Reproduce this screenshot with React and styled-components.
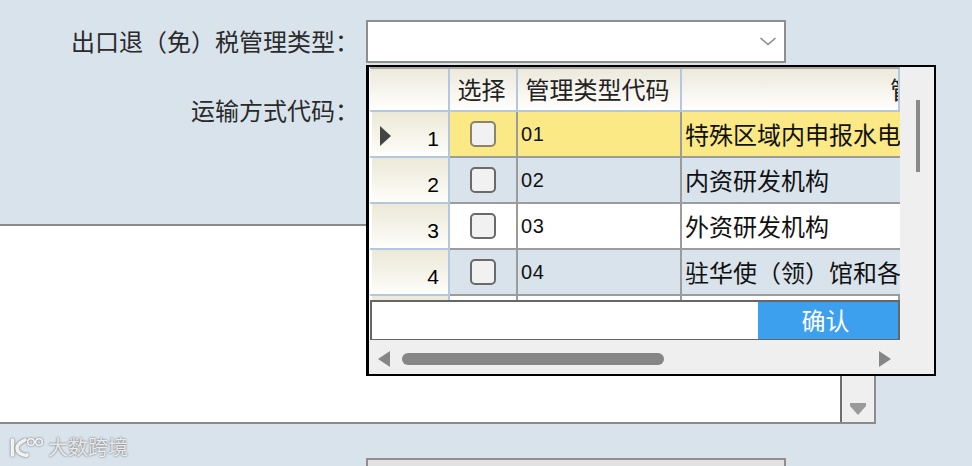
import React from 'react';
import styled, { createGlobalStyle } from 'styled-components';

const Global = createGlobalStyle`
  html, body { margin: 0; padding: 0; background: #d9e3ec; }
  * { box-sizing: border-box; }
  body { font-family: "Noto Sans CJK SC", "Liberation Sans", sans-serif; color: #222; }
`;

const Page = styled.div`
  position: relative;
  width: 972px;
  height: 466px;
  overflow: hidden;
  background: #d9e3ec;
  padding-top: 20px;
`;
const Form = styled.div`
  display: flex;
  flex-direction: column;
  gap: 26px;
`;
const FieldRow = styled.div`
  display: flex;
  align-items: flex-start;
  height: 43px;
`;
const Label = styled.label`
  width: 366px;
  flex: none;
  padding-right: 7px;
  text-align: right;
  font-size: 24px;
  line-height: 42px;
  white-space: nowrap;
  color: #2a2a2a;
`;
const Combo = styled.div`
  width: 420px;
  height: 43px;
  flex: none;
  display: flex;
  align-items: center;
  justify-content: flex-end;
  padding-right: 7px;
  background: ${p => p.$disabled ? '#e2e2e2' : '#fff'};
  border: 2px solid #8e8e8e;
`;
const TextPanel = styled.div`
  width: 876px;
  height: 200px;
  margin-top: 92px;
  display: flex;
  justify-content: flex-end;
  background: #fff;
  border-top: 2px solid #8a8a8a;
  border-bottom: 2px solid #8a8a8a;
  border-right: 2px solid #8e8e8e;
`;
const PanelScroll = styled.div`
  width: 34px;
  background: #efefef;
  border-left: 2px solid #6e6e6e;
  display: flex;
  align-items: flex-end;
  justify-content: center;
  padding-bottom: 7px;
`;
const BottomRow = styled(FieldRow)`
  margin-top: 34px;
  padding-left: 366px;
`;

const Popup = styled.div`
  position: absolute;
  left: 366px;
  top: 65px;
  width: 570px;
  height: 311px;
  border: 2px solid #000;
  border-left-width: 3px;
  background: #efefef;
  display: grid;
  grid-template-columns: 531px 1fr;
  grid-template-rows: 273px 1fr;
`;
const TableArea = styled.div`
  display: flex;
  flex-direction: column;
  overflow: hidden;
  background: #fff;
  padding-left: 1px;
`;
const GridRow = styled.div`
  display: grid;
  grid-template-columns: 80px 68px 164px 218px;
  height: ${p => p.$height}px;
  flex: none;
  overflow: hidden;
`;
const HeaderRow = styled(GridRow)`
  border-top: 2px solid #aaa8a0;
`;
const PartialRow = styled(GridRow)`
  grid-auto-rows: 46px;
`;
const HeaderCell = styled.div`
  background: linear-gradient(#ece9dc, #fbfaf6 80%, #fff);
  border-right: 2px solid #b3c7de;
  border-bottom: 2px solid #b3c7de;
  font-size: 24px;
  line-height: 39px;
  text-align: ${p => p.$align || 'center'};
  padding-left: ${p => p.$indent || 0}px;
  padding-right: ${p => p.$trim || 0}px;
  white-space: nowrap;
  overflow: hidden;
  color: #222;
`;
const RowHead = styled.div`
  position: relative;
  background: linear-gradient(#ece9d8, #fbfaf4 85%, #fff);
  border-right: 2px solid #b3c7de;
  border-bottom: 2px solid #b3c7de;
  box-shadow: inset 2px 0 0 #fff;
  display: flex;
  justify-content: flex-end;
  align-items: flex-end;
  padding: 0 9px 7px 0;
  font-family: "Liberation Sans", sans-serif;
  font-size: 21px;
  line-height: 20px;
  color: #000;
`;
const Pointer = styled.svg`
  position: absolute;
  left: 10px;
  top: 14px;
`;
const Cell = styled.div`
  background: ${p => p.$bg};
  border-right: 2px solid #9c9c9c;
  border-bottom: 2px solid #9c9c9c;
  display: flex;
  align-items: center;
  overflow: hidden;
  white-space: nowrap;
  color: #111;
`;
const CheckCell = styled(Cell)`
  justify-content: center;
`;
const Check = styled.span`
  width: 26px;
  height: 26px;
  border: 2px solid ${p => p.$selected ? '#8c8468' : '#6a6a6a'};
  border-radius: 5px;
  background: #f1f1f1;
`;
const CodeCell = styled(Cell)`
  padding-left: 3px;
  font-family: "Liberation Sans", sans-serif;
  font-size: 20px;
  letter-spacing: 0.6px;
`;
const NameCell = styled(Cell)`
  padding-left: 3px;
  font-size: 24px;
  border-right: none;
  padding-bottom: 2px;
`;
const Footer = styled.div`
  height: 41px;
  flex: none;
  display: flex;
  justify-content: flex-end;
  background: #fff;
  border: 2px solid #666;
`;
const Confirm = styled.button`
  width: 140px;
  border: 0;
  padding: 0 5px 2px 0;
  background: #3ca0ee;
  color: #fff;
  font: inherit;
  font-size: 24px;
  line-height: 35px;
`;
const VScroll = styled.div`
  grid-row: 1;
  grid-column: 2;
  padding: 33px 0 0 16px;
`;
const VThumb = styled.div`
  width: 4px;
  height: 72px;
  background: #8a8a8a;
`;
const HScroll = styled.div`
  grid-column: 1 / 3;
  display: flex;
  align-items: center;
  padding: 3px 0 0 9px;
`;
const HThumb = styled.div`
  width: 262px;
  height: 12px;
  margin-left: 12px;
  border-radius: 6px;
  background: #868686;
`;
const RightArrow = styled.svg`
  margin-left: auto;
  margin-right: 43px;
`;

const Watermark = styled.div`
  position: absolute;
  left: 8px;
  top: 435px;
  display: flex;
  align-items: center;
  gap: 4px;
  font-size: 20px;
  line-height: 24px;
  color: rgba(255, 255, 255, 0.85);
  text-shadow: 0 0 2px rgba(70, 70, 70, 0.95);
`;
const LogoMark = styled.svg`
  filter: drop-shadow(0 0 1px rgba(70, 70, 70, 0.9));
`;

const rows = [
  { n: 1, code: '01', name: '特殊区域内申报水电费用', bg: '#fbe985', selected: true },
  { n: 2, code: '02', name: '内资研发机构', bg: '#d9e3ec' },
  { n: 3, code: '03', name: '外资研发机构', bg: '#fff' },
  { n: 4, code: '04', name: '驻华使（领）馆和各类', bg: '#d9e3ec' },
];

export default function App() {
  return (
    <Page>
      <Global />
      <Form>
        <FieldRow>
          <Label>出口退（免）税管理类型：</Label>
          <Combo>
            <svg width="18" height="11" viewBox="0 0 18 11" fill="none" stroke="#8a8a8a" strokeWidth="1.6">
              <path d="M1.5 2l7.5 6.5L16.5 2" />
            </svg>
          </Combo>
        </FieldRow>
        <FieldRow>
          <Label>运输方式代码：</Label>
          <Combo />
        </FieldRow>
      </Form>
      <TextPanel>
        <PanelScroll>
          <svg width="16" height="12" viewBox="0 0 16 12"><path d="M0 0h16v3l-8 9-8-9z" fill="#9a9a9a" /></svg>
        </PanelScroll>
      </TextPanel>
      <BottomRow>
        <Combo $disabled />
      </BottomRow>

      <Popup>
        <TableArea>
          <HeaderRow $height={45}>
            <HeaderCell />
            <HeaderCell $trim={3}>选择</HeaderCell>
            <HeaderCell $trim={3}>管理类型代码</HeaderCell>
            <HeaderCell $align="left" $indent={208}>管理类型名称</HeaderCell>
          </HeaderRow>
          {rows.map(r => (
            <GridRow key={r.n} $height={46}>
              <RowHead>
                {r.selected && (
                  <Pointer width="11" height="20" viewBox="0 0 11 20"><path d="M0 0l11 10L0 20z" fill="#444" /></Pointer>
                )}
                {r.n}
              </RowHead>
              <CheckCell $bg={r.bg}><Check $selected={r.selected} /></CheckCell>
              <CodeCell $bg={r.bg}>{r.code}</CodeCell>
              <NameCell $bg={r.bg}>{r.name}</NameCell>
            </GridRow>
          ))}
          <PartialRow $height={4}>
            <RowHead />
            <Cell $bg="#fff" />
            <Cell $bg="#fff" />
            <Cell $bg="#fff" />
          </PartialRow>
          <Footer>
            <Confirm>确认</Confirm>
          </Footer>
        </TableArea>
        <VScroll><VThumb /></VScroll>
        <HScroll>
          <svg width="12" height="16" viewBox="0 0 12 16"><path d="M12 0v16L0 8z" fill="#868686" /></svg>
          <HThumb />
          <RightArrow width="12" height="16" viewBox="0 0 12 16"><path d="M0 0v16l12-8z" fill="#868686" /></RightArrow>
        </HScroll>
      </Popup>

      <Watermark>
        <LogoMark width="36" height="24" viewBox="0 0 36 24" fill="none" stroke="#fff" strokeOpacity="0.9" strokeLinecap="round">
          <path d="M4.5 5v15" strokeWidth="3.5" />
          <path d="M17 5C11 8 9 11 9 13c0 4 5 8 10 7" strokeWidth="3.5" />
          <circle cx="23" cy="7" r="3.3" strokeWidth="1.5" />
          <circle cx="31" cy="7" r="3.3" strokeWidth="1.5" />
        </LogoMark>
        <span>大数跨境</span>
      </Watermark>
    </Page>
  );
}
